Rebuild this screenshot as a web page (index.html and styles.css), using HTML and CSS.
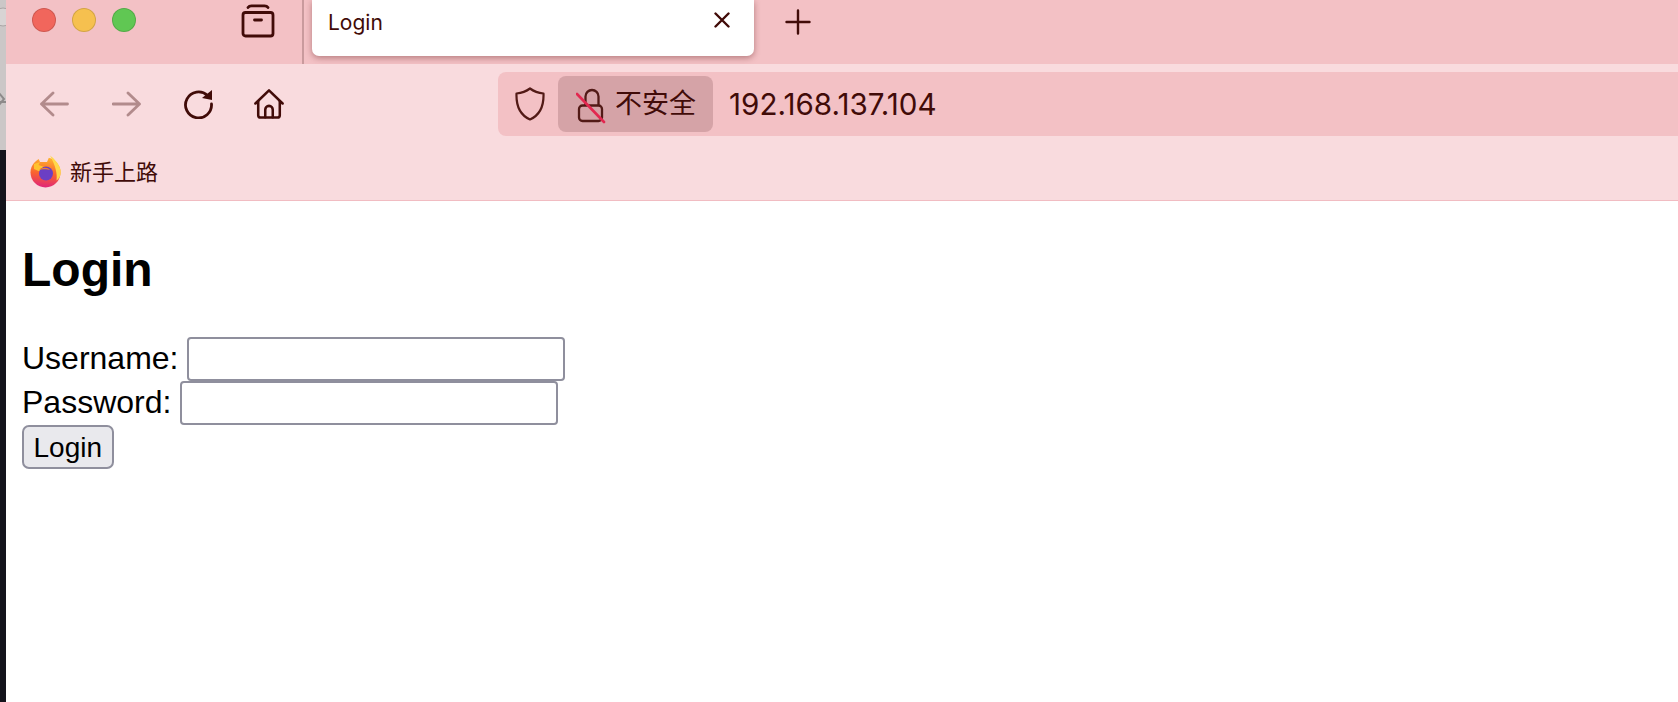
FILE: index.html
```html
<!DOCTYPE html>
<html lang="zh">
<head>
<meta charset="utf-8">
<title>Login</title>
<link rel="stylesheet" href="styles.css">
</head>
<body>
<div class="desktop">
  <div class="desk-top">
    <svg class="desk-glyphs" width="6" height="150" viewBox="0 0 6 150"><circle cx="3" cy="17" r="9" fill="#d8d4d4" stroke="#a9a5a5"/><path d="M-2 92l6 7-6 7M-2 102h8" fill="none" stroke="#8d8a8a" stroke-width="2"/></svg>
  </div>
  <div class="desk-bottom"></div>
</div>
<div class="window">
  <header class="tabbar">
    <div class="lights">
      <span class="light red"></span>
      <span class="light yellow"></span>
      <span class="light green"></span>
    </div>
    <button class="tool view-btn" aria-label="Firefox View">
      <svg width="34" height="34" viewBox="0 0 34 34" fill="none" stroke="#410b08" stroke-width="2.800" stroke-linecap="round" stroke-linejoin="round"><path d="M7 3.500C8 2 9 1.800 10.500 1.800h13c1.500 0 2.500.2 3.500 1.700"/><rect x="2" y="8.500" width="30" height="23.500" rx="2.500"/><path d="M13.500 16h7"/></svg>
    </button>
    <div class="divider"></div>
    <div class="tab">
      <span class="tab-title">Login</span>
      <svg class="tab-close" width="16" height="16" viewBox="0 0 16 16" fill="none" stroke="#410b08" stroke-width="2.400" stroke-linecap="round"><path d="M1.500 1.500l13 13M14.500 1.500l-13 13"/></svg>
    </div>
    <svg class="new-tab" width="26" height="26" viewBox="0 0 26 26" fill="none" stroke="#410b08" stroke-width="2.400" stroke-linecap="round"><path d="M13 1.500v23M1.500 13h23"/></svg>
  </header>

  <nav class="navbar">
    <div class="nav-tools">
      <svg class="dim" width="30" height="26" viewBox="0 0 30 26" fill="none" stroke="#410b08" stroke-width="2.800" stroke-linecap="round" stroke-linejoin="round"><path d="M1.500 13h26M13 2L1.500 13 13 24"/></svg>
      <svg class="dim" width="30" height="26" viewBox="0 0 30 26" fill="none" stroke="#410b08" stroke-width="2.800" stroke-linecap="round" stroke-linejoin="round"><path d="M1 13h26M16 2l11.500 11L16 24"/></svg>
      <svg class="reload" width="30" height="30" viewBox="0 0 30 30" fill="none"><path d="M23.500 6.500A13 13 0 1 0 27.500 15" stroke="#410b08" stroke-width="2.800" stroke-linecap="round"/><path d="M18 9L28 1v10z" fill="#410b08"/></svg>
      <svg class="home" width="30" height="30" viewBox="0 0 32 32" fill="none" stroke="#410b08" stroke-width="2.700" stroke-linecap="round" stroke-linejoin="round"><path d="M1.500 15.500L16 1.500l14.500 14"/><path d="M4.500 13v15c0 1.500.8 2.500 2.500 2.500h18c1.700 0 2.500-1 2.500-2.500V13"/><path d="M12 30v-8c0-2 1.500-4 4-4s4 2 4 4v8"/></svg>
    </div>
    <div class="urlbar">
      <svg class="shield" width="30" height="34" viewBox="0 0 30 34" fill="none" stroke="#521a16" stroke-width="2.200" stroke-linejoin="round"><path d="M15 1.500C11 4.500 6.500 6 1.500 6.500 1 20 5 28 15 32.500 25 28 29 20 28.500 6.500 23.500 6 19 4.500 15 1.500z"/></svg>
      <div class="chip">
        <svg class="lock" width="30" height="36" viewBox="0 0 30 36" fill="none"><rect x="3" y="17.500" width="23" height="15.500" rx="3.500" stroke="#521a16" stroke-width="2.300"/><path d="M9.500 17.500V8.500a6.500 6.500 0 0 1 13 0v9" stroke="#521a16" stroke-width="2.300"/><path d="M1 6l27 28" stroke="#e22850" stroke-width="2.600" stroke-linecap="round"/></svg>
        <span class="chip-label">不安全</span>
      </div>
      <span class="url">192.168.137.104</span>
    </div>
  </nav>

  <div class="bookmarks">
    <svg width="32" height="33" viewBox="0 0 32 33">
      <defs>
        <linearGradient id="fx" x1="0.600" y1="0" x2="0.500" y2="1"><stop offset="0" stop-color="#ffb52e"/><stop offset="0.550" stop-color="#f9622f"/><stop offset="1" stop-color="#e0257a"/></linearGradient>
      </defs>
      <circle cx="15.500" cy="17.500" r="15" fill="url(#fx)"/>
      <path d="M7 0h13l-3 7-7 0z" fill="#f9dbde"/>
      <path d="M20 .5c4 3 9 8 10.500 14 1 5-1 9-4 11 1-7-1-15-6.500-25z" fill="#ffd84a"/>
      <path d="M4 9l6-2-1.500 3 6 2-5 4.500L4 14z" fill="#ffc22e"/>
      <circle cx="16" cy="18.500" r="7" fill="#6b3fc4"/>
      <path d="M9 15c3-3 9-3 11 0-3-1-8-1-11 0z" fill="#f1852a"/>
    </svg>
    <span class="bookmark-label">新手上路</span>
  </div>

  <main class="page">
    <h1 class="title">Login</h1>
    <form class="login-form">
      <div class="field"><label class="field-label">Username:</label> <input class="input" type="text"></div>
      <div class="field field-wide"><label class="field-label">Password:</label> <input class="input" type="password"></div>
      <div class="field"><button class="submit" type="button">Login</button></div>
    </form>
  </main>
</div>
</body>
</html>
```
FILE: styles.css
```css
* { box-sizing: border-box; }
html, body { margin: 0; height: 100%; overflow: hidden; }
body { display: flex; background: #fff; }

.desktop { width: 6px; flex: none; display: flex; flex-direction: column; }
.desk-top { height: 150px; background: #cbc7c7; overflow: hidden; }
.desk-glyphs { display: block; }
.desk-bottom { flex: 1; background: #14141c; }

.window { flex: 1; min-width: 0; display: flex; flex-direction: column; }

.tabbar { height: 64px; background: #f3c1c5; display: flex; align-items: flex-start; flex: none; }
.lights { display: flex; gap: 16px; padding: 8px 0 0 26px; }
.light { width: 24px; height: 24px; border-radius: 50%; border: 1px solid rgba(0,0,0,.14); }
.red { background: #f1665c; }
.yellow { background: #f6c04f; }
.green { background: #60c753; }
.tool { background: none; border: 0; padding: 0; display: flex; }
.view-btn { margin: 4px 0 0 105px; }
.divider { width: 2px; height: 64px; margin-left: 27px; background: #c99a9d; }
.tab { width: 442px; height: 56px; margin-left: 8px; padding: 0 24px 12px 16px; background: #fff; border-radius: 0 0 7px 7px; box-shadow: 0 2px 6px rgba(90,20,20,.4); display: flex; align-items: center; justify-content: space-between; }
.tab-title { font: 21px/1 "Inter", sans-serif; color: #410b08; }
.tab-close { margin-bottom: 4px; }
.new-tab { margin: 9px 0 0 31px; }

.navbar { height: 78px; background: #f9dbde; display: flex; align-items: flex-start; flex: none; }
.nav-tools { width: 492px; height: 78px; padding: 2px 0 0 34px; display: flex; align-items: center; gap: 42px; }
.home { margin-left: -2px; }
.dim { opacity: .38; }
.urlbar { flex: 1; height: 64px; margin-top: 8px; padding-left: 17px; background: #f3c1c5; border-radius: 8px 0 0 8px; display: flex; align-items: center; }
.shield { flex: none; }
.chip { height: 56px; margin-left: 13px; width: 155px; padding-left: 18px; background: #d5a3a7; border-radius: 8px; display: flex; align-items: center; gap: 9px; }
.chip-label { font: 27px/1 "Noto Sans CJK SC", sans-serif; color: #410b08; margin-bottom: 6px; }
.lock { margin-top: 4px; }
.url { margin: 2px 0 0 16px; font: 29.600px/1 "Inter", sans-serif; color: #410b08; }

.bookmarks { height: 59px; background: #f9dbde; border-bottom: 1px solid #f1bcc2; display: flex; align-items: center; gap: 8px; padding: 0 0 0 24px; flex: none; }
.bookmark-label { font: 22px/1 "Noto Sans CJK SC", sans-serif; color: #410b08; margin-bottom: 2px; }

.page { padding: 0 16px; font: 32px/44px "Liberation Sans", Arial, sans-serif; color: #000; }
.title { margin: 41px 0 39px; font: bold 48px/56px "Liberation Sans", Arial, sans-serif; }
.field { height: 44px; display: flex; align-items: center; gap: 8px; }
.field-wide { gap: 9px; }
.field-label { margin-bottom: 2px; }
.input { width: 378px; height: 44px; padding: 0 4px; background: #fff; border: 2px solid #8f8f9d; border-radius: 4px; }
.submit { height: 44px; padding: 2px 9.500px 0; background: #e9e9ed; border: 2px solid #8f8f9d; border-radius: 7px; font: 28px/1 "Liberation Sans", Arial, sans-serif; color: #000; }
```
